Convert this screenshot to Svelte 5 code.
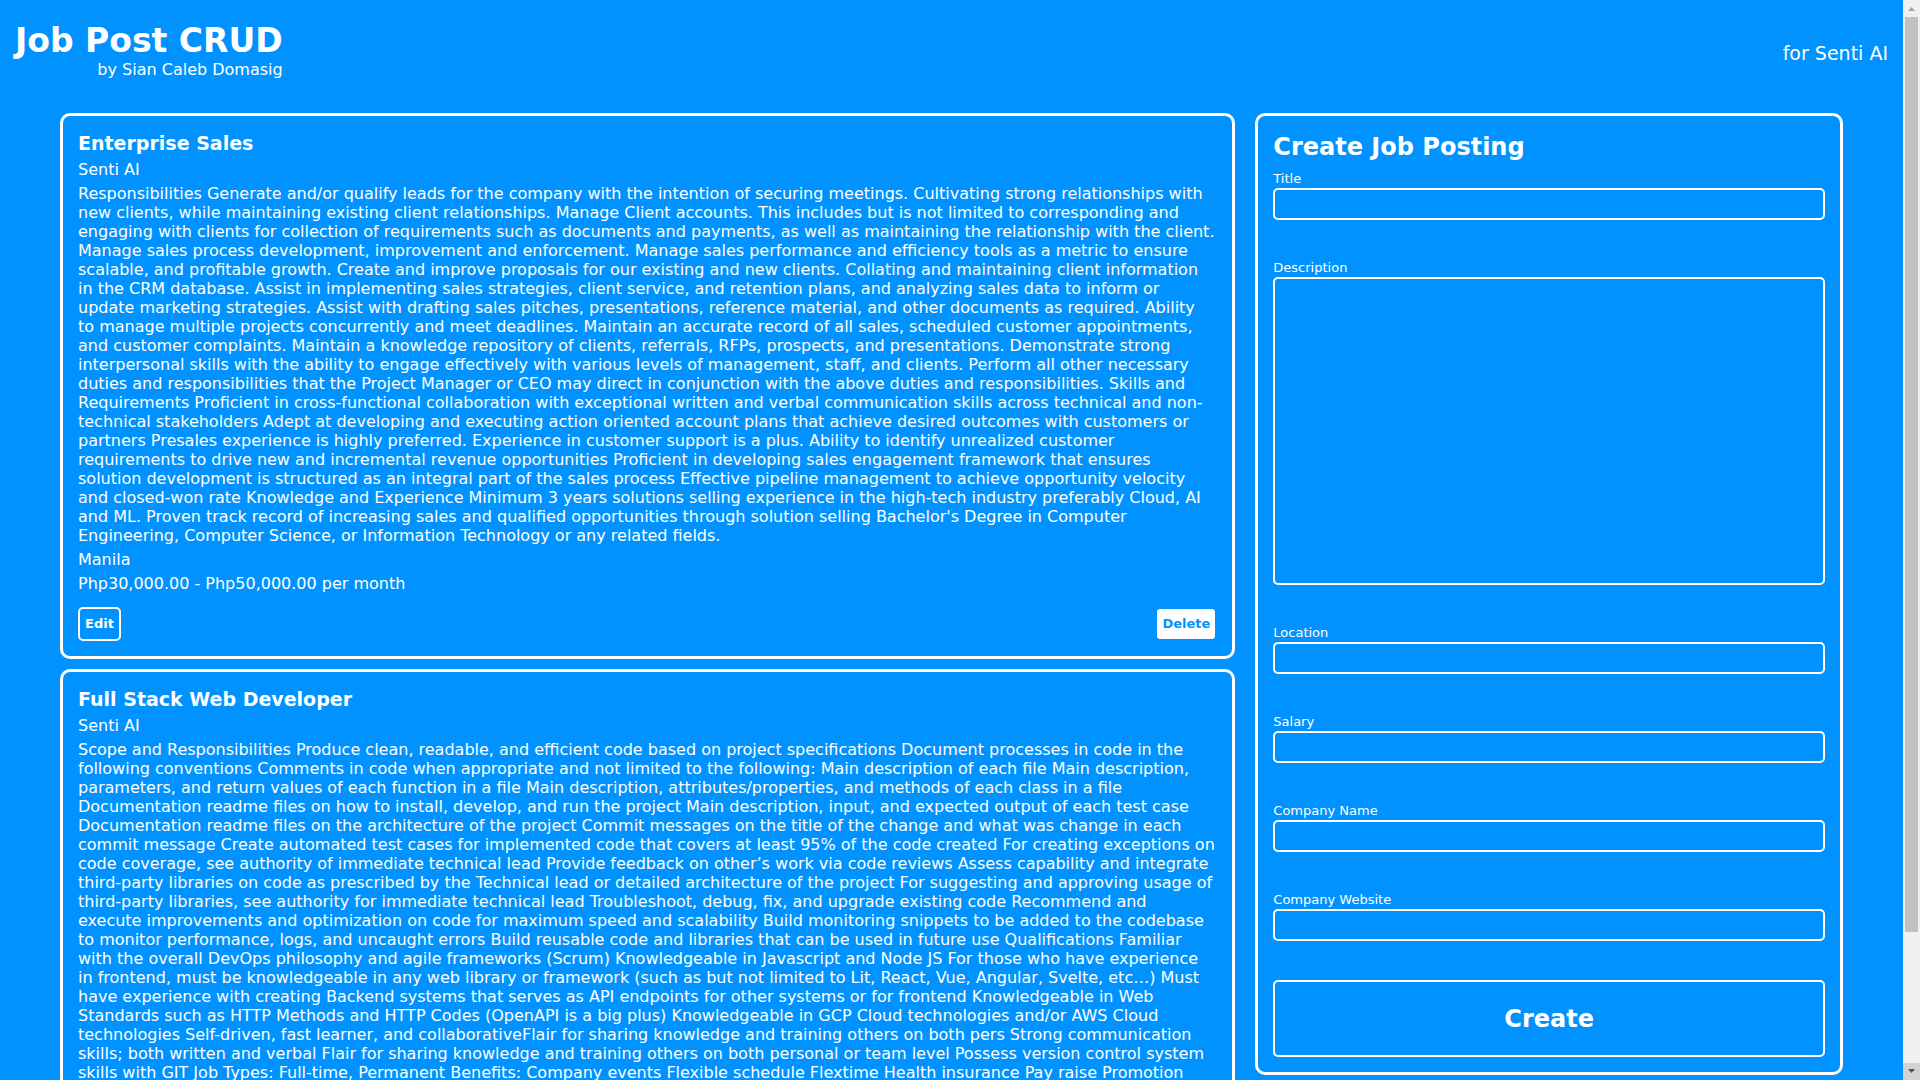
<script>
  const jobs = [
    {
      title: 'Enterprise Sales',
      company: 'Senti AI',
      description: [
        'Responsibilities Generate and/or qualify leads for the company with the intention of securing meetings. Cultivating strong relationships with',
        'new clients, while maintaining existing client relationships. Manage Client accounts. This includes but is not limited to corresponding and',
        'engaging with clients for collection of requirements such as documents and payments, as well as maintaining the relationship with the client.',
        'Manage sales process development, improvement and enforcement. Manage sales performance and efficiency tools as a metric to ensure',
        'scalable, and profitable growth. Create and improve proposals for our existing and new clients. Collating and maintaining client information',
        'in the CRM database. Assist in implementing sales strategies, client service, and retention plans, and analyzing sales data to inform or',
        'update marketing strategies. Assist with drafting sales pitches, presentations, reference material, and other documents as required. Ability',
        'to manage multiple projects concurrently and meet deadlines. Maintain an accurate record of all sales, scheduled customer appointments,',
        'and customer complaints. Maintain a knowledge repository of clients, referrals, RFPs, prospects, and presentations. Demonstrate strong',
        'interpersonal skills with the ability to engage effectively with various levels of management, staff, and clients. Perform all other necessary',
        'duties and responsibilities that the Project Manager or CEO may direct in conjunction with the above duties and responsibilities. Skills and',
        'Requirements Proficient in cross-functional collaboration with exceptional written and verbal communication skills across technical and non-',
        'technical stakeholders Adept at developing and executing action oriented account plans that achieve desired outcomes with customers or',
        'partners Presales experience is highly preferred. Experience in customer support is a plus. Ability to identify unrealized customer',
        'requirements to drive new and incremental revenue opportunities Proficient in developing sales engagement framework that ensures',
        'solution development is structured as an integral part of the sales process Effective pipeline management to achieve opportunity velocity',
        'and closed-won rate Knowledge and Experience Minimum 3 years solutions selling experience in the high-tech industry preferably Cloud, AI',
        "and ML. Proven track record of increasing sales and qualified opportunities through solution selling Bachelor's Degree in Computer",
        'Engineering, Computer Science, or Information Technology or any related fields.'
      ],
      location: 'Manila',
      salary: 'Php30,000.00 - Php50,000.00 per month'
    },
    {
      title: 'Full Stack Web Developer',
      company: 'Senti AI',
      description: [
        'Scope and Responsibilities Produce clean, readable, and efficient code based on project specifications Document processes in code in the',
        'following conventions Comments in code when appropriate and not limited to the following: Main description of each file Main description,',
        'parameters, and return values of each function in a file Main description, attributes/properties, and methods of each class in a file',
        'Documentation readme files on how to install, develop, and run the project Main description, input, and expected output of each test case',
        'Documentation readme files on the architecture of the project Commit messages on the title of the change and what was change in each',
        'commit message Create automated test cases for implemented code that covers at least 95% of the code created For creating exceptions on',
        'code coverage, see authority of immediate technical lead Provide feedback on other’s work via code reviews Assess capability and integrate',
        'third-party libraries on code as prescribed by the Technical lead or detailed architecture of the project For suggesting and approving usage of',
        'third-party libraries, see authority for immediate technical lead Troubleshoot, debug, fix, and upgrade existing code Recommend and',
        'execute improvements and optimization on code for maximum speed and scalability Build monitoring snippets to be added to the codebase',
        'to monitor performance, logs, and uncaught errors Build reusable code and libraries that can be used in future use Qualifications Familiar',
        'with the overall DevOps philosophy and agile frameworks (Scrum) Knowledgeable in Javascript and Node JS For those who have experience',
        'in frontend, must be knowledgeable in any web library or framework (such as but not limited to Lit, React, Vue, Angular, Svelte, etc…) Must',
        'have experience with creating Backend systems that serves as API endpoints for other systems or for frontend Knowledgeable in Web',
        'Standards such as HTTP Methods and HTTP Codes (OpenAPI is a big plus) Knowledgeable in GCP Cloud technologies and/or AWS Cloud',
        'technologies Self-driven, fast learner, and collaborativeFlair for sharing knowledge and training others on both pers Strong communication',
        'skills; both written and verbal Flair for sharing knowledge and training others on both personal or team level Possess version control system',
        'skills with GIT Job Types: Full-time, Permanent Benefits: Company events Flexible schedule Flextime Health insurance Pay raise Promotion'
      ],
      location: 'Manila',
      salary: 'Php30,000.00 - Php50,000.00 per month'
    }
  ];

  const fields = [
    { id: 'title', label: 'Title' },
    { id: 'description', label: 'Description', multiline: true },
    { id: 'location', label: 'Location' },
    { id: 'salary', label: 'Salary' },
    { id: 'company-name', label: 'Company Name' },
    { id: 'company-website', label: 'Company Website' }
  ];
</script>

<div class="window">
  <div class="page">
    <header>
      <div class="brand">
        <h1>Job Post CRUD</h1>
        <p>by Sian Caleb Domasig</p>
      </div>
      <p class="client">for Senti AI</p>
    </header>

    <main>
      <section class="jobs">
        {#each jobs as job}
          <article class="card">
            <h3>{job.title}</h3>
            <p>{job.company}</p>
            <p class="description">{job.description.join('\n')}</p>
            <p>{job.location}</p>
            <p>{job.salary}</p>
            <div class="actions">
              <button type="button">Edit</button>
              <button type="button" class="delete">Delete</button>
            </div>
          </article>
        {/each}
      </section>

      <form class="card">
        <h2>Create Job Posting</h2>
        {#each fields as field}
          <div class="field">
            <label for={field.id}>{field.label}</label>
            {#if field.multiline}
              <textarea id={field.id}></textarea>
            {:else}
              <input id={field.id} type="text" />
            {/if}
          </div>
        {/each}
        <button type="button" class="create">Create</button>
      </form>
    </main>
  </div>

  <div class="scrollbar" aria-hidden="true">
    <svg class="arrow" viewBox="0 0 17 17"><path d="M5 11h7L8.500 7z" fill="#a3a3a3" /></svg>
    <div class="track"><div class="thumb"></div></div>
    <svg class="arrow down" viewBox="0 0 17 17"><path d="M5 6h7L8.500 10z" fill="#505050" /></svg>
  </div>
</div>

<style>
  :global(body) {
    margin: 0;
    background: #0093ff;
  }

  .window {
    display: flex;
    height: 100vh;
    overflow: hidden;
    background: #0093ff;
    color: #fff;
    font: 16px/19px Verdana, 'DejaVu Sans', sans-serif;
  }

  .page {
    flex: 1;
    min-width: 0;
    overflow: hidden;
  }

  h1, h2, h3, p {
    margin: 0;
  }

  header {
    display: flex;
    justify-content: space-between;
    align-items: center;
    height: 106px;
    padding: 0 15px;
    margin-bottom: 7px;
  }

  .brand {
    padding-bottom: 5px;
    text-align: right;
  }

  h1 {
    font-size: 33px;
    line-height: 38px;
  }

  .client {
    font-size: 19px;
    line-height: 22px;
  }

  main {
    display: grid;
    grid-template-columns: minmax(0, 2fr) minmax(0, 1fr);
    align-items: start;
    gap: 20px;
    padding: 0 60px;
  }

  .jobs {
    display: flex;
    flex-direction: column;
    gap: 10px;
  }

  .card {
    padding: 15px;
    border: 3px solid #fff;
    border-radius: 10px;
  }

  article {
    display: flex;
    flex-direction: column;
    gap: 5px;
  }

  h3 {
    font-size: 19px;
    line-height: 24px;
  }

  .description {
    white-space: pre-line;
  }

  .actions {
    display: flex;
    justify-content: space-between;
    padding-top: 9px;
  }

  button {
    box-sizing: border-box;
    height: 34px;
    padding: 0 5px;
    border: 2px solid #fff;
    border-radius: 5px;
    background: #0093ff;
    color: #fff;
    font: bold 13px/16px Verdana, 'DejaVu Sans', sans-serif;
  }

  .delete {
    border-color: #0093ff;
    background: #fff;
    color: #0093ff;
  }

  h2 {
    margin-bottom: 7px;
    font-size: 24px;
    line-height: 32px;
  }

  .field {
    display: flex;
    flex-direction: column;
    margin-bottom: 39px;
  }

  label {
    font-size: 13px;
    line-height: 18px;
  }

  input, textarea {
    box-sizing: border-box;
    width: 100%;
    height: 32px;
    margin: 0;
    padding: 5px;
    border: 2px solid #fff;
    border-radius: 5px;
    outline: none;
    background: transparent;
    color: #fff;
    font: inherit;
  }

  textarea {
    display: block;
    height: 308px;
    resize: none;
  }

  .create {
    display: block;
    width: 100%;
    height: 77px;
    font-size: 24px;
    line-height: 28px;
  }

  .scrollbar {
    display: flex;
    flex-direction: column;
    width: 17px;
    background: #f0f0f0;
  }

  .arrow {
    display: block;
    width: 17px;
    height: 17px;
  }

  .down {
    background: #d2d2d2;
  }

  .track {
    flex: 1;
    padding: 0 2px;
  }

  .thumb {
    height: 87.5%;
    background: #c1c1c1;
  }
</style>
